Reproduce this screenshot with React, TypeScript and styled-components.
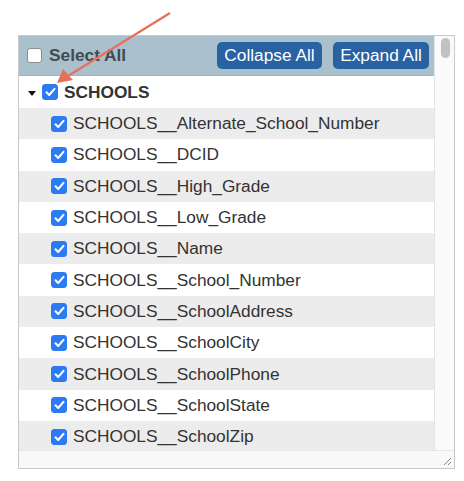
import React from "react";
import styled, { createGlobalStyle } from "styled-components";

const Global = createGlobalStyle`
  html, body { margin: 0; padding: 0; background: #ffffff; }
  body { font-family: "Liberation Sans", Arial, Helvetica, sans-serif; }
`;

const Page = styled.div`
  position: relative;
  width: 464px;
  height: 481px;
  padding: 35px 0 0 18px;
  box-sizing: border-box;
`;

const Panel = styled.div`
  width: 437px;
  height: 434px;
  box-sizing: border-box;
  border: 1px solid #c9c9c9;
  display: grid;
  grid-template-columns: 1fr 20px;
  grid-template-rows: 1fr 18px;
  background: #ffffff;
`;

const Body = styled.div`
  display: flex;
  flex-direction: column;
  overflow: hidden;
`;

const Header = styled.div`
  height: 40px;
  flex: none;
  background: #abc0cd;
  display: flex;
  align-items: center;
  padding: 0 5px 0 8px;
  border-bottom: 1px solid #9fb4c1;
  box-sizing: border-box;
`;

const SelectAll = styled.label`
  display: flex;
  align-items: center;
  gap: 7px;
  font-weight: bold;
  font-size: 17.3px;
  color: #434a50;
  flex: 1;
`;

const Box = styled.span<{ $checked?: boolean; $size?: number }>`
  width: ${(p) => p.$size ?? 15}px;
  height: ${(p) => p.$size ?? 15}px;
  box-sizing: border-box;
  border-radius: 3px;
  flex: none;
  display: inline-flex;
  align-items: center;
  justify-content: center;
  background: ${(p) => (p.$checked ? "#2c7bf3" : "#ffffff")};
  border: 1px solid ${(p) => (p.$checked ? "#2c7bf3" : "#8e8e8e")};
`;

const Button = styled.button<{ $w: number }>`
  width: ${(p) => p.$w}px;
  height: 27px;
  margin-left: 11px;
  border: none;
  border-radius: 5px;
  background: #2862a3;
  color: #ffffff;
  font-family: inherit;
  font-size: 17.3px;
  padding: 0;
  cursor: pointer;
`;

const GroupRow = styled.div`
  height: 32px;
  flex: none;
  display: flex;
  align-items: center;
  padding-left: 9px;
  gap: 6px;
  font-weight: bold;
  font-size: 17.3px;
  color: #333333;
`;

const Caret = styled.span`
  width: 0;
  height: 0;
  border-left: 4px solid transparent;
  border-right: 4px solid transparent;
  border-top: 5px solid #111111;
  margin-top: 2px;
`;

const ItemRow = styled.div<{ $shade: boolean }>`
  height: 31.3px;
  flex: none;
  display: flex;
  align-items: center;
  padding-left: 32px;
  gap: 6px;
  font-size: 17.3px;
  color: #333333;
  background: ${(p) => (p.$shade ? "#ececec" : "#ffffff")};
`;

const VScroll = styled.div`
  border-left: 1px solid #e3e3e3;
  background: #fafafa;
  padding: 2px 0 0 6px;
`;

const Thumb = styled.div`
  width: 9px;
  height: 20px;
  border-radius: 5px;
  background: #c2c2c2;
`;

const BottomStrip = styled.div`
  grid-column: 1 / span 2;
  border-top: 1px solid #e6e6e6;
  background: #f8f8f8;
  display: flex;
  justify-content: flex-end;
  align-items: flex-end;
  padding: 0 2px 2px 0;
`;

const Overlay = styled.svg`
  position: absolute;
  left: 0;
  top: 0;
  pointer-events: none;
`;

const Check = () => (
  <svg width="11" height="10" viewBox="0 0 11 10">
    <path d="M1.5 5.2 L4.2 8 L9.5 1.8" fill="none" stroke="#ffffff" strokeWidth="2" strokeLinecap="round" strokeLinejoin="round" />
  </svg>
);

const fields = [
  "Alternate_School_Number",
  "DCID",
  "High_Grade",
  "Low_Grade",
  "Name",
  "School_Number",
  "SchoolAddress",
  "SchoolCity",
  "SchoolPhone",
  "SchoolState",
  "SchoolZip",
];

export default function App() {
  return (
    <>
      <Global />
      <Page>
        <Panel>
          <Body>
            <Header>
              <SelectAll>
                <Box />
                Select All
              </SelectAll>
              <Button $w={105}>Collapse All</Button>
              <Button $w={96}>Expand All</Button>
            </Header>
            <GroupRow>
              <Caret />
              <Box $checked $size={16}>
                <Check />
              </Box>
              SCHOOLS
            </GroupRow>
            {fields.map((f, i) => (
              <ItemRow key={f} $shade={i % 2 === 0}>
                <Box $checked $size={16}>
                  <Check />
                </Box>
                SCHOOLS__{f}
              </ItemRow>
            ))}
          </Body>
          <VScroll>
            <Thumb />
          </VScroll>
          <BottomStrip>
            <svg width="10" height="10" viewBox="0 0 10 10">
              <path d="M2 9 L9 2 M6 9 L9 6" stroke="#8a8a8a" strokeWidth="1" />
            </svg>
          </BottomStrip>
        </Panel>
        <Overlay width="464" height="481" viewBox="0 0 464 481">
          <line x1="170" y1="13" x2="68" y2="76" stroke="#e7705c" strokeWidth="2.2" />
          <polygon points="57,83 63,69 73,80" fill="#e7705c" />
        </Overlay>
      </Page>
    </>
  );
}
